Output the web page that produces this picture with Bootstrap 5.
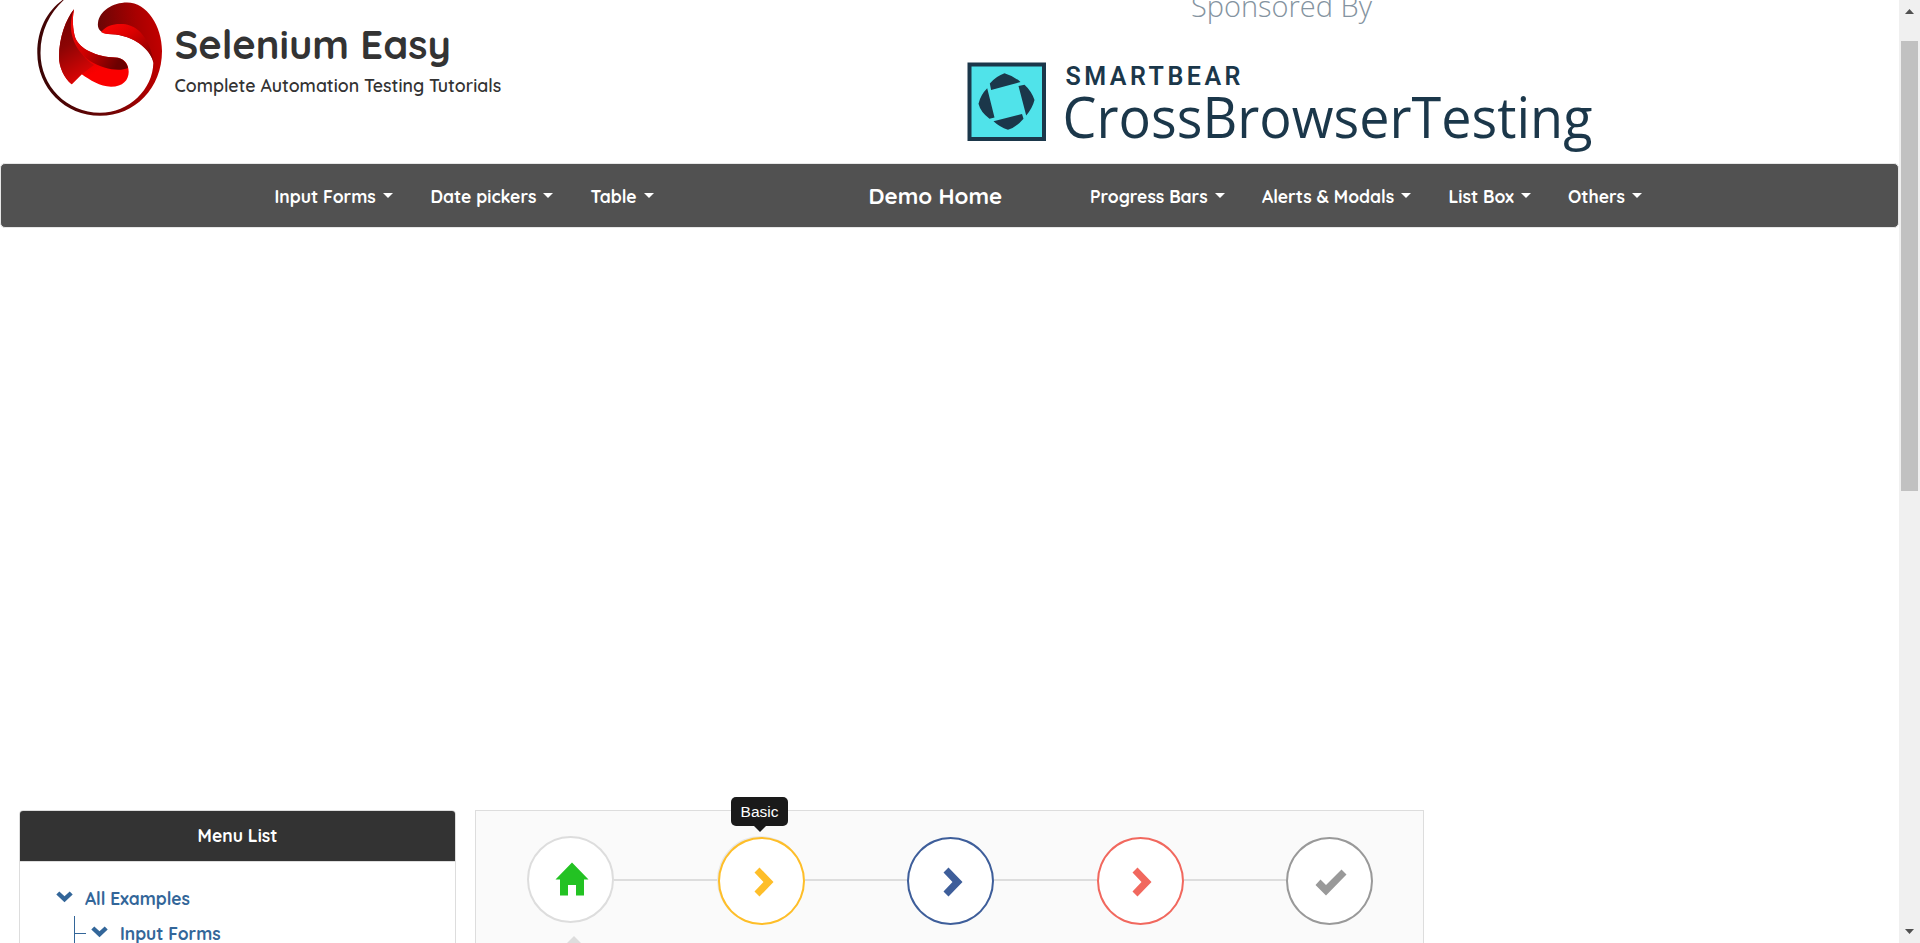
<!DOCTYPE html>
<html lang="en">
<head>
<meta charset="utf-8">
<meta name="viewport" content="width=device-width, initial-scale=1">
<title>Selenium Easy</title>
<link href="https://cdn.jsdelivr.net/npm/bootstrap@5.3.0/dist/css/bootstrap.min.css" rel="stylesheet">
<style>
body{font-family:Quicksand,Lato,sans-serif;color:#333;background:#fff;height:943px;overflow:hidden}
.page{width:1899px;height:943px;overflow:hidden}
.masthead{height:163px;padding-left:37px}
.logo{width:125px;height:125px;margin-top:-9px}
.titles{padding:19px 0 0 12.5px;width:806px}
.titles h1{font-size:39.9px;line-height:50px;font-weight:700;margin:0 0 3px}
.titles p{font-size:17.7px;line-height:26px;font-weight:600;margin:0}
.sponsor{width:640px;height:160px}
.site-nav{height:65px;background:#515151;border:1px solid #e7e7e7;border-radius:5px;padding:0 0 0 273.5px}
.site-nav a{color:#fff;text-decoration:none;font-weight:700;font-size:17.5px;line-height:26px;white-space:nowrap}
.menu-left,.menu-right{display:grid;column-gap:37.5px}
.menu-left{grid-template-columns:118.5px 122.5px 63px}
.menu-right{grid-template-columns:134.5px 149px 82px 74px}
.site-nav .home{font-size:22.3px;width:135px;margin:0 86.5px 0 215px}
.caret{width:0;border:5px solid transparent;border-top-color:#fff;border-bottom:0}
.lower{margin-top:582px;padding-left:19px;gap:19px}
.side{width:437px;height:300px;border:1px solid #ddd;border-radius:4px;flex:none}
.side-head{height:51px;background:#333;color:#fff;font-weight:700;font-size:17.5px;border-bottom:1px solid #ddd;border-radius:3px 3px 0 0;padding-bottom:2px}
.tree{padding:24px 0 0 36px}
.tree a{color:#369;text-decoration:none;font-weight:700;font-size:17.4px;line-height:26px;gap:12px}
.tree svg{margin-top:5px}
.tree .branch{margin:9px 0 0 18px}
.elbow{width:12px;height:60px;border-left:1px solid #369;margin:-5px 5px 0 0}
.elbow:before{content:"";display:block;height:18px;border-bottom:1px solid #369}
.steps{width:949px;height:300px;background:#fafafa;border:1px solid #ddd;flex:none;padding:25px 50px 0 51px}
.step{width:87px;height:88px;border:2px solid;border-radius:50%;background:#fff;margin-top:1px;flex:none}
.step svg{margin:2px 0 0 4px}
.step.first{margin-top:0;height:87px;color:#ddd}
.step.first svg{margin:-1px 0 0 2px}
.s-yellow{color:#febe29;box-shadow:-1px -1px 0 #e8e8e8}
.s-blue{color:#3e5e9a}.s-red{color:#f1685e}.s-gray{color:#999}
.line{height:2px;background:#ddd;margin-top:43px;flex:1}
.step.first + .line{flex:0 0 104px}
.tip{left:255px;top:-14px;width:57px;height:29px;background:#1a1a1a;color:#fff;border-radius:5px;font:15.5px/30px "Liberation Sans",sans-serif;text-align:center}
.tip:after{content:"";position:absolute;left:23px;top:29px;border:6px solid transparent;border-top-color:#1a1a1a;border-bottom:0}
.pointer{width:0;border:12px solid transparent;border-bottom-color:#ddd;border-top:0;margin:11px 0 0 35px}
.scrollbar-col{width:21px;height:943px;background:#f0f0f0;padding:9px 0}
.thumb{width:17px;height:450px;background:#c1c1c1;margin-top:27px}
</style>
<script src="https://cdn.jsdelivr.net/npm/bootstrap@5.3.0/dist/js/bootstrap.bundle.min.js"></script>
</head>
<body class="d-flex">
<div class="page flex-shrink-0">
  <header class="masthead d-flex">
    <svg class="logo flex-shrink-0" viewBox="0 0 125 125">
      <defs>
        <linearGradient id="ring" x1="0" y1=".3" x2="1" y2=".2"><stop offset="0" stop-color="#3c0505"/><stop offset=".5" stop-color="#6d0505"/><stop offset=".8" stop-color="#a80000"/><stop offset="1" stop-color="#c40000"/></linearGradient>
        <linearGradient id="bright" x1="0" y1="0" x2="1" y2="1"><stop offset="0" stop-color="#ff0505"/><stop offset=".4" stop-color="#dc0000"/><stop offset="1" stop-color="#7a0000"/></linearGradient>
        <linearGradient id="lower" x1=".3" y1="0" x2=".8" y2=".9"><stop offset="0" stop-color="#e00000"/><stop offset=".3" stop-color="#c00404"/><stop offset=".8" stop-color="#fa0000"/></linearGradient>
        <linearGradient id="flap" x1="0" y1="0" x2=".3" y2="1"><stop offset="0" stop-color="#700000"/><stop offset=".5" stop-color="#8c0505"/><stop offset="1" stop-color="#d80505"/></linearGradient>
        <linearGradient id="fold" x1="0" y1="0" x2="1" y2=".6"><stop offset="0" stop-color="#ff0a0a"/><stop offset=".5" stop-color="#cc0000"/><stop offset="1" stop-color="#6c0000"/></linearGradient>
      </defs>
      <path fill="url(#ring)" d="M71 43C64 42 60 38 61 32C62 20 76 11.5 90 11.5C110 11.5 125 35 125 60C125 97 98 124.8 63 124.8C28 124.8.3 97 .3 62C.3 36 12 17 30 6C14 20 3.5 38 3.5 62C3.5 95 30 121.8 63 121.8C92 121.8 116 98 116.3 72C114 55 92 43 71 43Z"/>
      <path fill="url(#bright)" d="M64 41C70 34 77 32.500 86 33C101 34 113 48 116.300 70C110 54 92 43 71 43C68 43 66 42 64 41Z"/>
      <path fill="url(#lower)" d="M37 18.300C29 28 22 47 22 66C22 76 27 87 34.700 93.300L44.700 83.300C53 89 63 95.700 74 95.700C86 95.700 91.700 89 91.700 80.700C91.700 73 87 66.500 78 66.500C60 66 42 58 38 46C36 38 35 29 37 18.300Z"/>
      <path fill="url(#flap)" d="M37 18.300C29 28 22 47 22 66C22 76 27 87 34.700 93.300L44.700 83.300L57 74C40 64 31 40 37 18.300Z"/>
      <path fill="url(#fold)" d="M37 18.300C35 29 36 38 38 46C42 58 60 66 78 66.500C86 66.500 90 72 91 77C82 81 66 78 53 70C37 59 29 39 37 18.300Z"/>
    </svg>
    <div class="titles flex-shrink-0">
      <h1>Selenium Easy</h1>
      <p>Complete Automation Testing Tutorials</p>
    </div>
    <svg class="sponsor flex-shrink-0" viewBox="968.5 0 640 160" font-family="Open Sans, Noto Sans, sans-serif" overflow="visible">
      <text x="1191.500" y="17" font-size="29" font-weight="300" fill="#8493a0" textLength="181" lengthAdjust="spacingAndGlyphs">Sponsored By</text>
      <path fill="#50e3ea" stroke="#1b374a" stroke-width="4" d="M970 64.500h74.500v74.500h-74.500z"/>
      <path fill="#1b374a" d="M990.300 83.500Q997 76 1005 73.300Q1014 76 1021 82L991.600 90ZM1019 86L1025 84.700Q1032 91 1035 100Q1033 108 1026.700 115.500ZM1022.500 114L1024 118.700Q1017 127 1008.500 129.800Q1000 127 994 121.300ZM987.700 88.300L995 117.500L990 118.700Q981 112 979 103.700Q981 95 987.700 88.300Z"/>
      <text x="1066" y="84.500" font-family="Roboto, sans-serif" font-size="25" font-weight="600" fill="#1b374a" textLength="175" lengthAdjust="spacing">SMARTBEAR</text>
      <text x="1063" y="137.500" font-size="56" font-weight="400" fill="#1b374a" textLength="530" lengthAdjust="spacingAndGlyphs">CrossBrowserTesting</text>
    </svg>
  </header>

  <nav class="site-nav d-flex align-items-center">
    <div class="menu-left">
      <a class="d-flex align-items-center justify-content-between" href="#">Input Forms <span class="caret"></span></a>
      <a class="d-flex align-items-center justify-content-between" href="#">Date pickers <span class="caret"></span></a>
      <a class="d-flex align-items-center justify-content-between" href="#">Table <span class="caret"></span></a>
    </div>
    <a class="home" href="#">Demo Home</a>
    <div class="menu-right">
      <a class="d-flex align-items-center justify-content-between" href="#">Progress Bars <span class="caret"></span></a>
      <a class="d-flex align-items-center justify-content-between" href="#">Alerts &amp; Modals <span class="caret"></span></a>
      <a class="d-flex align-items-center justify-content-between" href="#">List Box <span class="caret"></span></a>
      <a class="d-flex align-items-center justify-content-between" href="#">Others <span class="caret"></span></a>
    </div>
  </nav>

  <main class="lower d-flex">
    <section class="side">
      <div class="side-head d-flex align-items-center justify-content-center">Menu List</div>
      <div class="tree">
        <a class="d-flex" href="#"><svg width="17" height="12" viewBox="0 0 17 12"><path fill="#369" d="M3.300.5L8.500 5.200L13.700.5L16.700 3.500L8.500 11.300L.3 3.500Z"/></svg>All Examples</a>
        <div class="branch d-flex">
          <span class="elbow"></span>
          <a class="d-flex" href="#"><svg width="17" height="12" viewBox="0 0 17 12"><path fill="#369" d="M3.300.5L8.500 5.200L13.700.5L16.700 3.500L8.500 11.300L.3 3.500Z"/></svg>Input Forms</a>
        </div>
      </div>
    </section>

    <section class="steps position-relative">
      <div class="d-flex align-items-start">
        <div class="step first d-flex align-items-center justify-content-center"><svg width="34" height="34" viewBox="0 0 34 34"><path fill="#23c223" d="M17 .5L33.500 17.500H29V33.500H21V23H13V33.500H5V17.500H.5Z"/></svg></div>
        <span class="line"></span>
        <div class="step s-yellow d-flex align-items-center justify-content-center"><svg width="20" height="30" viewBox="0 0 20 30"><path fill="currentColor" d="M5.500.5L19.500 15L5.500 29.500L.5 24.500L9.500 15L.5 5.500Z"/></svg></div>
        <span class="line"></span>
        <div class="step s-blue d-flex align-items-center justify-content-center"><svg width="20" height="30" viewBox="0 0 20 30"><path fill="currentColor" d="M5.500.5L19.500 15L5.500 29.500L.5 24.500L9.500 15L.5 5.500Z"/></svg></div>
        <span class="line"></span>
        <div class="step s-red d-flex align-items-center justify-content-center"><svg width="20" height="30" viewBox="0 0 20 30"><path fill="currentColor" d="M5.500.5L19.500 15L5.500 29.500L.5 24.500L9.500 15L.5 5.500Z"/></svg></div>
        <span class="line"></span>
        <div class="step s-gray d-flex align-items-center justify-content-center"><svg width="32" height="27" viewBox="0 0 32 27"><path fill="currentColor" d="M26.500.5L31.500 5.500L11 26.500L.5 16L5.500 10.500L11 16Z"/></svg></div>
      </div>
      <div class="pointer"></div>
      <div class="tip position-absolute">Basic</div>
    </section>
  </main>
</div>
<aside class="scrollbar-col d-flex flex-column align-items-center justify-content-between flex-shrink-0">
  <div class="d-flex flex-column align-items-center">
    <svg width="9" height="5" viewBox="0 0 9 5"><path fill="#505050" d="M4.500 0L9 5H0Z"/></svg>
    <div class="thumb"></div>
  </div>
  <svg width="9" height="5" viewBox="0 0 9 5"><path fill="#505050" d="M4.500 5L9 0H0Z"/></svg>
</aside>
</body>
</html>
